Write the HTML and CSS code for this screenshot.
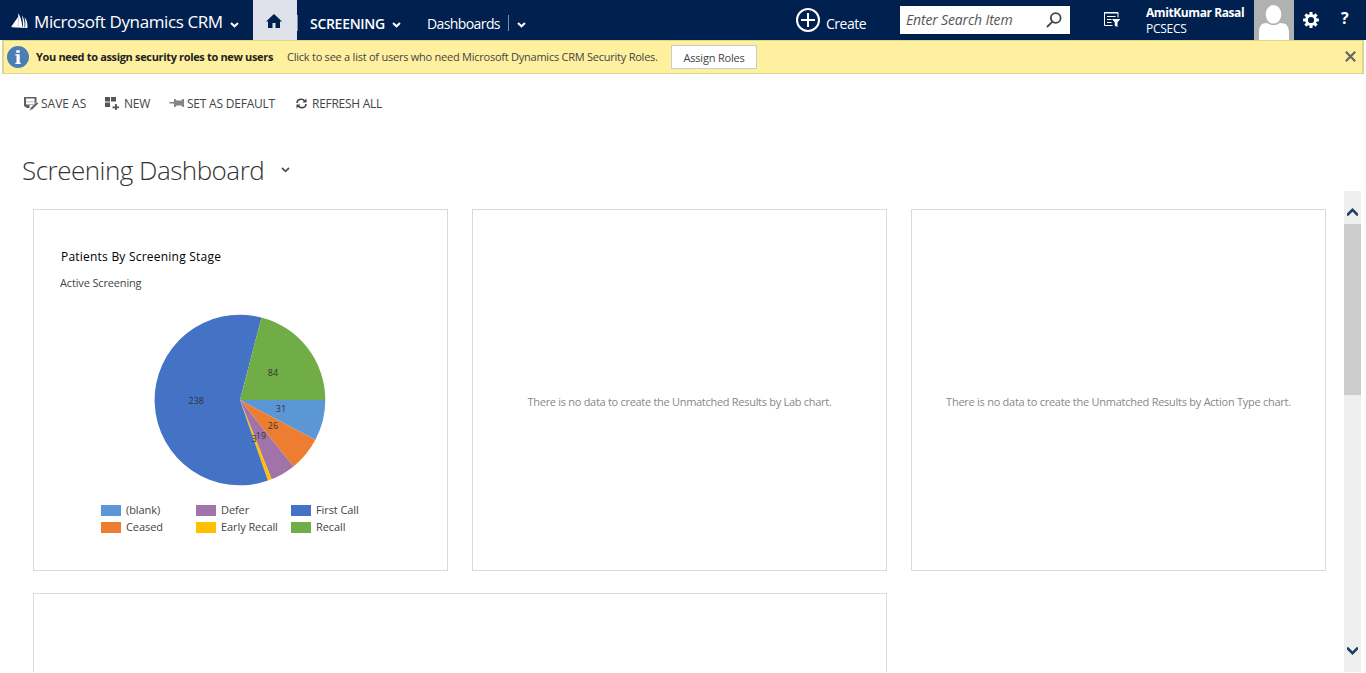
FILE: index.html
```html
<!DOCTYPE html>
<html lang="en">
<head>
<meta charset="utf-8">
<title>Screening Dashboard - Microsoft Dynamics CRM</title>
<link rel="stylesheet" href="styles.css">
</head>
<body>
<header class="navbar">
  <svg class="logo" width="18" height="16" viewBox="0 0 18 16"><path d="M0 14L7 4v9.500zM7.200 13.500V.3c2.400 3.500 3.700 8 4 13.500zM10.800 2.200c2.400 3 3.200 7.500 2.700 12.100h-1.800c.5-4 .2-7.800-.9-12.100zM13.600 4.200c2.500 3 3 6.500 2.900 10.600h-2.400c.5-3.800.3-7-.5-10.600zM0 14.300l8-1 8.500 1.700z" fill="#fff"/></svg>
  <span class="brand">Microsoft Dynamics CRM</span>
  <svg class="chev chev-brand" width="9" height="6" viewBox="0 0 9 6"><path d="M1 1l3.500 3.300L8 1"/></svg>
  <div class="home"><svg width="16" height="15" viewBox="0 0 16 15"><path d="M8 0l8 7.500h-2V14H9.500V9h-3v5H2V7.500H0z" fill="#00204f"/></svg></div>
  <i class="divider"></i>
  <span class="area">SCREENING</span>
  <svg class="chev chev-area" width="9" height="6" viewBox="0 0 9 6"><path d="M1 1l3.500 3.300L8 1"/></svg>
  <span class="sub">Dashboards</span>
  <i class="divider"></i>
  <svg class="chev chev-sub" width="9" height="6" viewBox="0 0 9 6"><path d="M1 1l3.500 3.300L8 1"/></svg>
  <svg class="plus" width="24" height="24" viewBox="0 0 24 24"><circle cx="12" cy="12" r="11"/><path d="M12 5v14M5 12h14"/></svg>
  <span class="create">Create</span>
  <div class="search"><span class="placeholder">Enter Search Item</span><svg width="16" height="16" viewBox="0 0 16 16"><circle cx="9.700" cy="6" r="4.900"/><path d="M6.200 9.800L1 15"/></svg></div>
  <svg class="advfind" width="17" height="16" viewBox="0 0 17 16"><path d="M8.500 14.500H.5V1.500M0 1.500h14v5M3 5.500h8.500M3 8.500h4.500M3 11.500h4.500" fill="none" stroke="#fff"/><path d="M0 1h14v1.500H0zM8 8h8.300l-2.800 3.500V16l-2.700-1.200v-3.300z" fill="#fff"/></svg>
  <div class="user"><b class="uname">AmitKumar Rasal</b><span class="org">PCSECS</span></div>
  <svg class="avatar" width="40" height="40" viewBox="0 0 40 40"><path d="M0 0h40v40H0z" fill="#b1b1b1"/><ellipse cx="19.500" cy="14.300" rx="7.800" ry="9.300" fill="#fff"/><path d="M5 40V32.500c0-6.500 2.500-9.500 7.500-9.500 1.500 0 3.500 2.300 7 2.300s5.500-2.300 7-2.300c5.500 0 8.500 3 8.500 9.500V40z" fill="#fff"/></svg>
  <svg class="gear" width="16" height="16" viewBox="-8 -8 16 16"><circle r="4.500" fill="none" stroke="#fff" stroke-width="2.800"/><g stroke="#fff" stroke-width="3"><path d="M0-7.900v3M0 7.900v-3M-7.900 0h3M7.900 0h-3M-5.600-5.600l2 2M5.600 5.600l-2-2M-5.600 5.600l2-2M5.600-5.600l-2 2"/></g></svg>
  <span class="help">?</span>
</header>

<section class="notice">
  <svg class="info" width="22" height="22" viewBox="0 0 22 22"><circle cx="11" cy="11" r="11" fill="#4a7eb5"/><path d="M9.300 4.300h3.400v2.500H9.300zM8.300 8.300h4.400v8.500h1.100v1.200H8.300v-1.200h1.200V9.500H8.300z" fill="#fff"/></svg>
  <b class="notice-title">You need to assign security roles to new users</b>
  <span class="notice-text">Click to see a list of users who need Microsoft Dynamics CRM Security Roles.</span>
  <button class="assign"><span>Assign Roles</span></button>
  <svg class="close" width="11" height="11" viewBox="0 0 11 11"><path d="M.8.8l9.400 9.400M10.200.8L.8 10.200"/></svg>
</section>

<nav class="commands">
  <svg class="ic-save" width="15" height="15" viewBox="0 0 15 15"><path d="M0 0h12.500v5l-3 3H5.500v3H3L0 9zM2 1.500v6h8.500v-6z" fill="#606060" fill-rule="evenodd"/><path d="M2 4.300h8.500v1H2z" fill="#bbb"/><path d="M12.700 4.800l1.700 1.700-6 6-3 1.200 1.200-3z" fill="#606060" stroke="#fff" stroke-width=".5"/></svg>
  <span class="cmd cmd-save">SAVE AS</span>
  <svg class="ic-new" width="15" height="14" viewBox="0 0 15 14"><path d="M0 0h5v4.500H0zM6 0h5v4.500H6zM0 5.500h5V10H0zM10 7h1.800v2.500H14v1.800h-2.200V13H10v-1.700H7.500V9.500H10z" fill="#555"/></svg>
  <span class="cmd cmd-new">NEW</span>
  <svg class="ic-pin" width="16" height="10" viewBox="0 0 16 10"><path d="M0 4.300l5-.5V1h1.500l1 1.500h5L13.500 1H15v8h-1.500l-1-1.500h-5L6.500 9H5V5.700L0 5.200z" fill="#858585"/></svg>
  <span class="cmd cmd-default">SET AS DEFAULT</span>
  <svg class="ic-refresh" width="11" height="11" viewBox="0 0 11 11"><path d="M1 5C1.200 2.500 3 1.300 5.300 1.300c1.500 0 2.500.6 3.300 1.700M10 6c-.2 2.500-2 3.700-4.300 3.700C4.200 9.700 3.200 9.100 2.400 8" fill="none" stroke="#444" stroke-width="1.600"/><path d="M10.500.5v4h-4zM.5 10.500v-4h4z" fill="#444"/></svg>
  <span class="cmd cmd-refresh">REFRESH ALL</span>
</nav>

<div class="heading"><h1>Screening Dashboard</h1><svg width="9" height="7" viewBox="0 0 9 7"><path d="M1 1l3.500 3.300L8 1" fill="none" stroke="#555" stroke-width="1.800"/></svg></div>

<main class="viewport">
  <div class="grid">
    <section class="card chart">
      <h2>Patients By Screening Stage</h2>
      <p class="view">Active Screening</p>
      <svg class="pie" width="172" height="172" viewBox="-86 -86 172 172">
        <path d="M0 0L85.300 0A85.300 85.300 0 0 1 75.400 39.800z" fill="#5b97d5"/>
        <path d="M0 0L75.400 39.800A85.300 85.300 0 0 1 53.500 66.400z" fill="#ed7d31"/>
        <path d="M0 0L53.500 66.400A85.300 85.300 0 0 1 31.600 79.200z" fill="#a074a8"/>
        <path d="M0 0L31.600 79.200A85.300 85.300 0 0 1 27.900 80.600z" fill="#ffc000"/>
        <path d="M0 0L27.900 80.600A85.300 85.300 0 1 1 21.500 -82.500z" fill="#4472c4"/>
        <path d="M0 0L21.500 -82.500A85.300 85.300 0 0 1 85.300 0z" fill="#70ad47"/>
        <text x="-43.700" y="4">238</text><text x="33" y="-24">84</text><text x="41" y="12">31</text><text x="33" y="29">26</text><text x="14" y="42">3</text><text x="21" y="39">19</text>
      </svg>
      <div class="legend">
        <span><i class="sw blank"></i>(blank)</span><span><i class="sw defer"></i>Defer</span><span><i class="sw first"></i>First Call</span>
        <span><i class="sw ceased"></i>Ceased</span><span><i class="sw early"></i>Early Recall</span><span><i class="sw recall"></i>Recall</span>
      </div>
    </section>
    <section class="card empty"><span class="nodata lab">There is no data to create the Unmatched Results by Lab chart.</span></section>
    <section class="card empty"><span class="nodata action">There is no data to create the Unmatched Results by Action Type chart.</span></section>
    <section class="card wide"></section>
  </div>
  <div class="scrollbar">
    <svg class="up" width="11" height="9" viewBox="0 0 11 9"><path d="M0 7.300L5.500 1.800 11 7.300"/></svg>
    <div class="thumb"></div>
    <svg class="down" width="11" height="9" viewBox="0 0 11 9"><path d="M0 1.700l5.500 5.500L11 1.700"/></svg>
  </div>
</main>
</body>
</html>
```
FILE: styles.css
```css
* { box-sizing: border-box; }
body { margin: 0; height: 673px; overflow: hidden; background: #fff; color: #444; font-family: "Open Sans", "Noto Sans", sans-serif; font-size: 12px; display: flex; flex-direction: column; }
span, b, h1, h2, p { white-space: nowrap; }
svg, i, .navbar > *, .notice > *, .commands > * { flex: none; }

/* top navigation */
.navbar { flex: none; height: 40px; background: #00204f; color: #fff; display: flex; align-items: flex-start; }
.logo { margin: 13px 0 0 11px; }
.brand { width: 201px; margin: 10px 0 0 5px; font-size: 17px; line-height: 24px; letter-spacing: -0.39px; }
.chev { margin-top: 22px; }
.chev path { fill: none; stroke: #fff; stroke-width: 2; }
.chev-brand { margin-left: -5px; }
.home { width: 44px; height: 40px; margin-left: 14px; background: #dfe2ea; display: flex; justify-content: center; padding: 14px 2px 0 0; }
.divider { width: 1px; height: 16px; margin-top: 15px; background: #7f8fa7; }
.area { width: 82px; margin: 14px 0 0 12px; font-size: 14px; font-weight: 600; line-height: 20px; letter-spacing: -0.3px; }
.sub { width: 81px; margin: 14px 0 0 26px; font-size: 14px; line-height: 20px; letter-spacing: -0.6px; }
.chev-sub { margin-left: 8px; }
.plus { margin: 8px 0 0 270px; }
.plus * { fill: none; stroke: #fff; stroke-width: 2; }
.create { width: 74px; margin: 14px 0 0 6px; font-size: 14px; line-height: 20px; letter-spacing: -0.5px; }
.search { width: 170px; height: 28px; margin-top: 6px; background: #fff; display: flex; justify-content: space-between; padding: 6px 8px 0 6px; }
.search svg * { fill: none; stroke: #444; stroke-width: 1.8; }
.placeholder { color: #555; font-size: 14px; font-style: italic; line-height: 16px; letter-spacing: -0.16px; }
.advfind { margin: 11px 0 0 34px; }
.user { width: 108px; margin: 5px 0 0 25px; display: flex; flex-direction: column; font-size: 12px; line-height: 16px; }
.uname { letter-spacing: -0.42px; }
.org { letter-spacing: -0.25px; }
.gear { margin: 12px 0 0 9px; }
.help { margin: 8px 0 0 22px; font-size: 16px; font-weight: 700; line-height: 20px; }

/* notification bar */
.notice { flex: none; height: 34px; margin: 0 2px; background: #fff09f; border: 1px solid #d9d78b; border-width: 1px 2px 1px 2px; display: flex; align-items: flex-start; }
.info { margin: 5px 0 0 3px; }
.notice-title { width: 251px; margin: 8px 0 0 7px; color: #222; font-size: 11px; line-height: 16px; letter-spacing: -0.34px; }
.notice-text { width: 384px; margin-top: 8px; font-size: 11px; line-height: 16px; letter-spacing: -0.24px; }
.assign { width: 86px; height: 24px; margin-top: 4px; padding: 0; background: #fff; border: 1px solid #ccc; color: #444; font: 11px/22px "Open Sans", "Noto Sans", sans-serif; letter-spacing: -0.2px; }
.assign span { position: relative; top: 1px; }
.close { margin: 10px 0 0 588px; }
.close path { stroke: #666; stroke-width: 2.200; }

/* command bar */
.commands { flex: none; height: 60px; padding: 22px 0 0 24px; display: flex; align-items: flex-start; }
.cmd { font-size: 12px; line-height: 16px; letter-spacing: -0.28px; }
.ic-save, .ic-new { margin-top: 1px; }
.cmd-save { width: 64px; margin-left: 2px; letter-spacing: 0; }
.cmd-new { width: 45px; margin-left: 4px; }
.ic-pin { margin-top: 2px; }
.cmd-default { width: 109px; margin-left: 2px; letter-spacing: -0.22px; }
.ic-refresh { margin-top: 2px; }
.cmd-refresh { margin-left: 5px; }

.heading { flex: none; height: 57px; padding: 17px 0 0 22px; display: flex; }
.heading h1 { width: 259px; margin: 0; color: #333; font-size: 26px; font-weight: 300; line-height: 38px; letter-spacing: -0.5px; }
.heading svg { margin-top: 16px; }

/* dashboard */
.viewport { flex: none; height: 481px; overflow: hidden; display: flex; justify-content: space-between; padding: 0 5px 0 33px; }
.grid { display: grid; grid-template-columns: repeat(3, 415px); grid-template-rows: 362px 200px; gap: 22px 24px; padding-top: 18px; }
.card { border: 1px solid #dadada; background: #fff; }
.wide { grid-column: span 2; }
.chart { display: flex; flex-direction: column; }
.chart h2 { margin: 38px 0 0 27px; color: #000; font-size: 12px; font-weight: 400; line-height: 18px; letter-spacing: 0.22px; }
.view { margin: 9px 0 0 26px; font-size: 11px; line-height: 16px; letter-spacing: -0.15px; }
.pie { margin: 23px 0 0 120px; }
.pie text { fill: #333; font-size: 9px; text-anchor: middle; }
.legend { margin: 15px 0 0 67px; display: grid; grid-template-columns: repeat(3, 95px); grid-auto-rows: 17px; font-size: 11px; letter-spacing: -0.08px; }
.legend span { display: flex; align-items: center; gap: 5px; }
.sw { width: 20px; height: 11px; margin-top: 2px; }
.blank { background: #5b97d5; }
.defer { background: #a074a8; }
.first { background: #4472c4; }
.ceased { background: #ed7d31; }
.early { background: #ffc000; }
.recall { background: #70ad47; }
.empty { display: flex; justify-content: center; padding-top: 184px; }
.nodata { color: #888; font-size: 11px; line-height: 16px; }
.lab { letter-spacing: -0.29px; }
.action { letter-spacing: -0.26px; }
.scrollbar { width: 17px; background: #efefef; display: flex; flex-direction: column; align-items: center; }
.up { margin-top: 17px; }
.thumb { width: 17px; height: 171px; margin-top: 7px; background: #cdcdcd; }
.down { margin: auto 0 17px; }
.scrollbar path { fill: none; stroke: #1d3c66; stroke-width: 2.500; }
```
